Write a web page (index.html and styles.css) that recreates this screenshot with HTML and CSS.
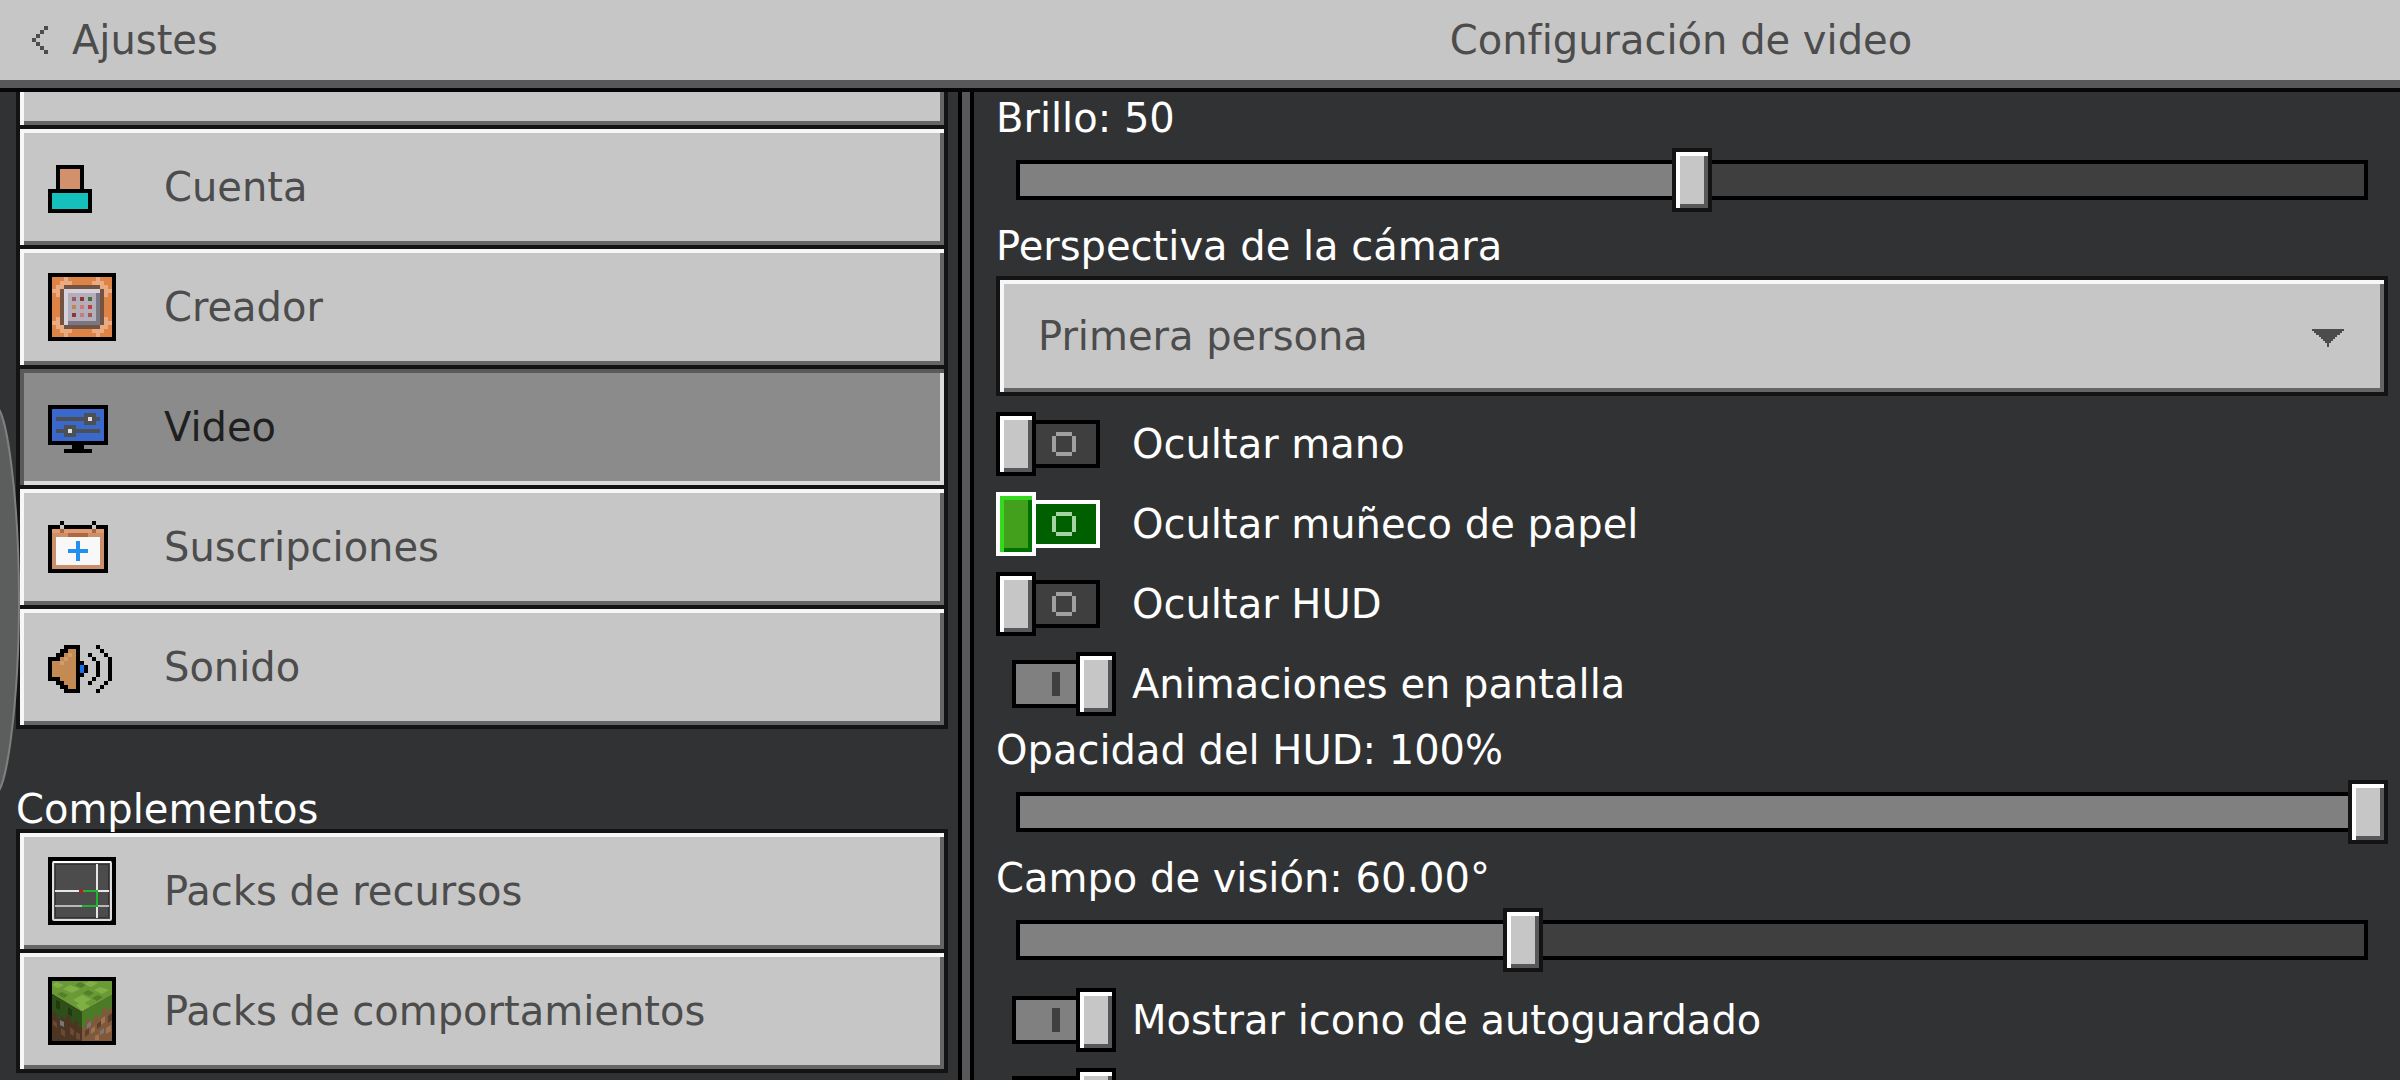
FILE: index.html
```html
<!DOCTYPE html>
<html lang="es">

<head>
    <meta charset="UTF-8">
    <meta name="viewport" content="width=device-width, initial-scale=1.0">
    <title>Configuración de video</title>
    <link rel="stylesheet" href="styles.css">
</head>

<body>
    <header class="topbar">
        <button class="back" type="button">
            <svg class="back-icon" viewBox="0 0 4 7" shape-rendering="crispEdges">
                <path d="M3 0h1v1h-1zM2 1h1v1h-1zM1 2h1v1h-1zM0 3h1v1h-1zM1 4h1v1h-1zM2 5h1v1h-1zM3 6h1v1h-1z" />
            </svg>
            Ajustes
        </button>
        <h1 class="title">Configuración de video</h1>
    </header>

    <main class="panes">
        <nav class="sidebar">
            <div class="menu menu-scrolled">
                <button class="menu-item" type="button" aria-label="Anterior"></button>
                <button class="menu-item" type="button">
                    <svg class="icon" viewBox="0 0 17 17" shape-rendering="crispEdges">
                        <path d="M2 3h7v6h2v6h-11v-6h2z" />
                        <path fill="#d3906c" d="M3 4h5v5h-5z" />
                        <path fill="#15bfbc" d="M1 10h9v4h-9z" />
                    </svg>
                    Cuenta
                </button>
                <button class="menu-item" type="button">
                    <svg class="icon" viewBox="0 0 17 17" shape-rendering="crispEdges">
                        <path d="M0 0h17v17h-17z" />
                        <path fill="#de8346" d="M1 1h15v15h-15z" />
                        <path fill="#eaab82" d="M4 1h1v1h1v1h-2v1h-1v2h-1v-1h-1v-1h1v-1h1v-1h1zM12 1h1v1h1v1h1v1h1v1h-1v1h-1v-2h-1v-1h-2v-1h1zM1 12h1v-1h1v2h1v1h2v1h-1v1h-1v-1h-1v-1h-1v-1h-1zM15 11v1h1v1h-1v1h-1v1h-1v1h-1v-1h-1v-1h2v-1h1v-2z" />
                        <path fill="#745440" d="M4 3h9v1h1v9h-1v1h-9v-1h-1v-9h1z" />
                        <path fill="#d5d2dc" d="M4 4h9v9h-9z" />
                        <path fill="#7b7684" d="M12 5h1v8h-8v-1h7z" />
                        <path fill="#b3afba" d="M5 5h7v7h-7z" />
                        <path fill="#a55558" d="M6 6h1v1h-1zM10 10h1v1h-1z" />
                        <path fill="#973033" d="M8 6h1v1h-1zM6 10h1v1h-1z" />
                        <path fill="#4e6b35" d="M10 6h1v1h-1z" />
                        <path fill="#bd8849" d="M6 8h1v1h-1z" />
                        <path fill="#ca7c7c" d="M8 8h1v1h-1zM8 10h1v1h-1z" />
                        <path fill="#c03e3e" d="M10 8h1v1h-1z" />
                    </svg>
                    Creador
                </button>
                <button class="menu-item active" type="button" aria-current="page">
                    <svg class="icon" viewBox="0 0 17 17" shape-rendering="crispEdges">
                        <path d="M0 3h15v10h-6v1h2v1h-7v-1h2v-1h-6z" />
                        <path fill="#3a68cb" d="M1 4h13v8h-13z" />
                        <path fill="#4c5055" d="M2 6h7v-1h3v1h1v1h-1v1h-3v-1h-7zM2 9h2v-1h3v1h6v1h-6v1h-3v-1h-2z" />
                        <path fill="#dedede" d="M10 6h1v1h-1zM5 9h1v1h-1z" />
                    </svg>
                    Video
                </button>
                <button class="menu-item" type="button">
                    <svg class="icon" viewBox="0 0 17 17" shape-rendering="crispEdges">
                        <path d="M3 2h1v1h7v-1h1v1h3v12h-15v-12h3z" />
                        <path fill="#c6c6c6" d="M3 3h1v1h-1zM11 3h1v1h-1z" />
                        <path fill="#cb906b" d="M1 4h13v10h-13z" />
                        <path fill="#e29a70" d="M1 4h13v1h-13z" />
                        <path fill="#ad683f" d="M3 4h1v1h-1zM11 4h1v1h-1zM5 5h5v1h-5z" />
                        <path fill="#f8f8f8" d="M2 6h11v7h-11z" />
                        <path fill="#258ff0" d="M7 7h1v2h2v1h-2v2h-1v-2h-2v-1h2z" />
                    </svg>
                    Suscripciones
                </button>
                <button class="menu-item" type="button">
                    <svg class="icon" viewBox="0 0 17 17" shape-rendering="crispEdges">
                        <path d="M4 3h4v4h1v1h1v2h-1v1h-1v4h-4v-1h-1v-1h-1v-1h-2v-6h2v-1h1v-1h1z" />
                        <path fill="#c38a53" d="M5 4h2v10h-2v-1h-1v-1h-1v-1h-2v-4h2v-1h1v-1h1z" />
                        <path fill="#d19c6b" d="M5 5h1v1h-1v1h-1v1h-1v-1h1v-1h1z" />
                        <path fill="#1671ee" d="M8 8h1v2h-1z" />
                        <path d="M10 5h1v1h-1zM11 6h1v1h-1zM12 7h1v4h-1zM11 11h1v1h-1zM10 12h1v1h-1zM12 3h1v1h-1zM13 4h1v1h-1zM14 5h1v1h-1zM15 6h1v6h-1zM14 12h1v1h-1zM13 13h1v1h-1zM12 14h1v1h-1z" />
                    </svg>
                    Sonido
                </button>
            </div>

            <h2 class="menu-heading">Complementos</h2>
            <div class="menu">
                <button class="menu-item" type="button">
                    <svg class="icon" viewBox="0 0 68 68">
                        <path d="M0 0h68v68h-68z" />
                        <rect x="5" y="5" width="58" height="58" rx="1" fill="#4c4c4c" stroke="#dcdcdc" stroke-width="2" />
                        <path fill="#fff" d="M5 4h58v2h-58z" />
                        <path fill="none" stroke="#333" d="M7.500 7.500h53v53h-53z" />
                        <path fill="none" stroke="#e6e6e6" stroke-width="2" d="M49 7v54M7 34h54" />
                        <path fill="none" stroke="#b5b9b9" stroke-width="2" d="M7 49h54" />
                        <path fill="none" stroke="#21b432" stroke-width="2" d="M34 34h15v15h-15" />
                        <path fill="#b02020" d="M31 33h2v-1h2v5h-2v-2h-2z" />
                    </svg>
                    Packs de recursos
                </button>
                <button class="menu-item" type="button">
                    <svg class="icon" viewBox="0 0 68 68">
                        <path d="M0 0h68v68h-68z" />
                        <path fill="#6a9a36" d="M4 4h60v14l-30 17l-30 -18z" />
                        <path fill="#80b045" d="M8 5l8 3l-6 3l-6 -3zM22 8l10 4l-8 4l-9 -4zM42 4l8 2l-7 4l-8 -3zM52 10l9 3l-7 4l-8 -4zM34 18l9 4l-9 6l-9 -5zM28 28l6 -3l8 4l-8 5z" />
                        <path fill="#527f29" d="M32 5l6 3l-5 3l-6 -3zM14 15l6 3l-4 3l-7 -4zM40 13l6 3l-5 3l-6 -3zM50 18l5 2l-6 4l-5 -3z" />
                        <path fill="#4d3524" d="M4 17l30 18v29h-30z" />
                        <path fill="#80583c" d="M64 18l-30 17v29h30z" />
                        <path fill="#2f4f18" d="M4 17l30 18v16l-4 -2v-4l-4 -2v4l-4 -3v-5l-4 -2v6l-5 -4v4l-4 -3v-3l-5 -3z" />
                        <path fill="#4c7b28" d="M64 18l-30 17v16l4 -3v-5l4 -2v5l4 -3v-4l4 -2v5l4 -4v-6l4 -2v5l6 -6z" />
                        <path fill="#203a10" d="M8 23l4 2v8l-4 -2zM20 30l4 3v7l-4 -3z" />
                        <path fill="#6b4a31" d="M5 43l4 3v5l-4 -3zM13 51l4 3v6l-4 -3zM22 50l4 3v6l-4 -2zM28 55l4 2v6l-4 -1z" />
                        <path fill="#a07350" d="M43 52l4 -3v5l-4 3zM53 42l4 -3v6l-4 3zM58 51l5 -3v6l-5 3zM47 59l4 -2v6h-4z" />
                        <path fill="#59402c" d="M37 54l4 -3v6l-4 3zM49 47l4 -3v5l-4 3zM60 39l4 -3v7l-4 3z" />
                        <path fill="#777879" d="M12 43l4 2v5l-4 -2zM39 47l4 -3v5l-4 3zM52 54l4 -3v5l-4 2z" />
                    </svg>
                    Packs de comportamientos
                </button>
            </div>
        </nav>

        <section class="settings">
            <label class="field-label first" for="brillo">Brillo: 50</label>
            <input class="slider" id="brillo" type="range" min="0" max="100" value="50" style="--fill: 0.5">

            <label class="field-label" for="perspectiva">Perspectiva de la cámara</label>
            <div class="dropdown">
                <select id="perspectiva">
                    <option>Primera persona</option>
                </select>
                <svg class="dropdown-arrow" viewBox="0 0 32 18">
                    <path d="M0 0h32v2h-2v2h-2v2h-3v2h-2v2h-2v2h-2v2h-2v4h-2v-4h-2v-2h-2v-2h-2v-2h-2v-2h-3v-2h-2v-2h-2z" />
                </svg>
            </div>

            <div class="switches">
                <label class="switch-row"><input class="switch" type="checkbox">Ocultar mano</label>
                <label class="switch-row"><input class="switch highlighted" type="checkbox">Ocultar muñeco de papel</label>
                <label class="switch-row"><input class="switch" type="checkbox">Ocultar HUD</label>
                <label class="switch-row"><input class="switch" type="checkbox" checked>Animaciones en pantalla</label>
            </div>

            <label class="field-label" for="opacidad">Opacidad del HUD: 100%</label>
            <input class="slider" id="opacidad" type="range" min="0" max="100" value="100" style="--fill: 1">

            <label class="field-label" for="campo">Campo de visión: 60.00°</label>
            <input class="slider" id="campo" type="range" min="30" max="110" value="60" style="--fill: 0.375">

            <div class="switches">
                <label class="switch-row"><input class="switch" type="checkbox" checked>Mostrar icono de autoguardado</label>
                <label class="switch-row"><input class="switch" type="checkbox" checked></label>
            </div>
        </section>
    </main>

    <!-- edge handle -->
    <svg class="edge-handle" viewBox="0 0 22 390">
        <path d="M-4 2C6 2 19 90 19 195S6 388 -4 388z" />
    </svg>

    <script>
        document.querySelectorAll('.slider').forEach((slider) => {
            slider.addEventListener('input', () => {
                let fill = (slider.value - slider.min) / (slider.max - slider.min);
                slider.style.setProperty('--fill', fill);
            });
        });
    </script>
</body>

</html>
```
FILE: styles.css
```css
* {
    box-sizing: border-box;
}

body {
    margin: 0;
    height: 100vh;
    display: flex;
    flex-direction: column;
    overflow: hidden;
    background-color: #313233;
    color: #ffffff;
    font-family: "DejaVu Sans", sans-serif;
    font-size: 40px;
    line-height: 48px;
}

button,
select {
    font: inherit;
    cursor: pointer;
}

h1,
h2 {
    margin: 0;
    font-size: 40px;
    font-weight: normal;
}

/* top bar */
.topbar {
    flex: none;
    display: grid;
    grid-template-columns: calc(40% + 2px) 1fr;
    align-items: center;
    height: 92px;
    background-color: #c6c6c6;
    border-bottom: 4px solid #060606;
    box-shadow: inset 0 -8px #58585a;
    padding-bottom: 8px;
    color: #4c4c4c;
}

.back {
    display: flex;
    align-items: center;
    gap: 24px;
    padding: 0 0 0 32px;
    border: none;
    background: none;
    color: #4c4c4c;
}

.back-icon {
    width: 16px;
    height: 28px;
    fill: #4c4c4c;
}

.title {
    text-align: center;
}

.panes {
    flex: 1;
    min-height: 0;
    display: grid;
    grid-template-columns: calc(40% + 2px) 1fr;
}

/* sidebar */
.sidebar {
    overflow: hidden;
    padding: 0 10px 0 16px;
    border-right: 4px solid #000000;
}

.menu {
    display: flex;
    flex-direction: column;
    gap: 4px;
    padding: 4px;
    background-color: #131313;
}

.menu-scrolled {
    margin-top: -87px;
}

.menu-heading {
    padding-top: 60px;
    line-height: 40px;
}

.menu-item {
    display: flex;
    align-items: center;
    gap: 48px;
    height: 116px;
    padding: 0 28px;
    border: none;
    background-color: #c6c6c6;
    box-shadow: inset 4px 4px #f7f7f7, inset -4px -4px #656565;
    color: #4c4c4c;
}

.menu-item.active {
    background-color: #8b8b8b;
    box-shadow: inset 4px 4px #5a5a5a, inset -4px -4px #dcdcdc;
    color: #1f1f1f;
}

.icon {
    width: 68px;
    height: 68px;
}

/* settings */
.settings {
    display: flex;
    flex-direction: column;
    overflow: hidden;
    padding: 0 12px 0 26px;
    border-left: 8px solid #58585a;
    box-shadow: inset 4px 0 #000000;
}

.settings > * {
    flex: none;
}

.field-label {
    height: 64px;
    padding-top: 4px;
    line-height: 60px;
}

.field-label.first {
    margin-top: -8px;
}

.slider {
    appearance: none;
    width: 100%;
    height: 64px;
    margin: 0;
    background:
        linear-gradient(#808080, #808080) 24px 16px / calc((100% - 48px) * var(--fill)) 32px no-repeat,
        linear-gradient(#3f3f3f, #3f3f3f) 24px 16px / calc(100% - 48px) 32px no-repeat,
        linear-gradient(#000000, #000000) 20px 12px / calc(100% - 40px) 40px no-repeat;
}

.slider::-webkit-slider-thumb {
    appearance: none;
    width: 40px;
    height: 64px;
    border: 4px solid #131313;
    background-color: #c6c6c6;
    box-shadow: inset 4px 4px #ffffff, inset -4px -4px #58585a;
}

.dropdown {
    position: relative;
    height: 120px;
}

.dropdown select {
    appearance: none;
    width: 100%;
    height: 100%;
    padding: 0 88px 0 38px;
    border: 4px solid #131313;
    border-radius: 0;
    background-color: #c6c6c6;
    box-shadow: inset 4px 4px #f7f7f7, inset -4px -4px #656565;
    color: #4c4c4c;
}

.dropdown-arrow {
    position: absolute;
    top: 53px;
    right: 44px;
    width: 32px;
    height: 18px;
    fill: #4c4c4c;
    pointer-events: none;
}

.switches {
    display: flex;
    flex-direction: column;
    gap: 16px;
    padding-top: 16px;
}

.switch-row {
    display: flex;
    align-items: center;
    gap: 16px;
    height: 64px;
}

.switch {
    --mark: #a0a0a0;
    appearance: none;
    position: relative;
    flex: none;
    width: 120px;
    height: 64px;
    margin: 0;
}

.switch::before,
.switch::after {
    content: "";
    position: absolute;
    box-sizing: border-box;
    border: 4px solid #000000;
}

/* track, with the O mark */
.switch::before {
    left: 0;
    top: 8px;
    width: 104px;
    height: 48px;
    background:
        linear-gradient(var(--mark), var(--mark)) 56px 8px / 16px 4px no-repeat,
        linear-gradient(var(--mark), var(--mark)) 56px 28px / 16px 4px no-repeat,
        linear-gradient(var(--mark), var(--mark)) 52px 12px / 4px 16px no-repeat,
        linear-gradient(var(--mark), var(--mark)) 72px 12px / 4px 16px no-repeat,
        #3f3f3f;
}

/* knob */
.switch::after {
    left: 0;
    top: 0;
    width: 40px;
    height: 64px;
    background-color: #c6c6c6;
    box-shadow: inset 4px 4px #ffffff, inset -4px -4px #58585a;
}

.switch:checked::before {
    left: 16px;
    background: linear-gradient(#3f3f3f, #3f3f3f) 36px 8px / 8px 24px no-repeat #808080;
}

.switch:checked::after {
    left: 80px;
}

.switch.highlighted {
    --mark: #a6d3a6;
}

.switch.highlighted::before {
    border-color: #ffffff;
    background-color: #006000;
}

.switch.highlighted::after {
    border-color: #ffffff;
    background-color: #43a01c;
    box-shadow: inset 4px 4px #36d820, inset -4px -4px #007000;
}

.edge-handle {
    position: absolute;
    left: 0;
    top: 405px;
    width: 22px;
    height: 390px;
    fill: #5b5e5c;
    stroke: #7d807f;
    stroke-width: 2;
}
```
